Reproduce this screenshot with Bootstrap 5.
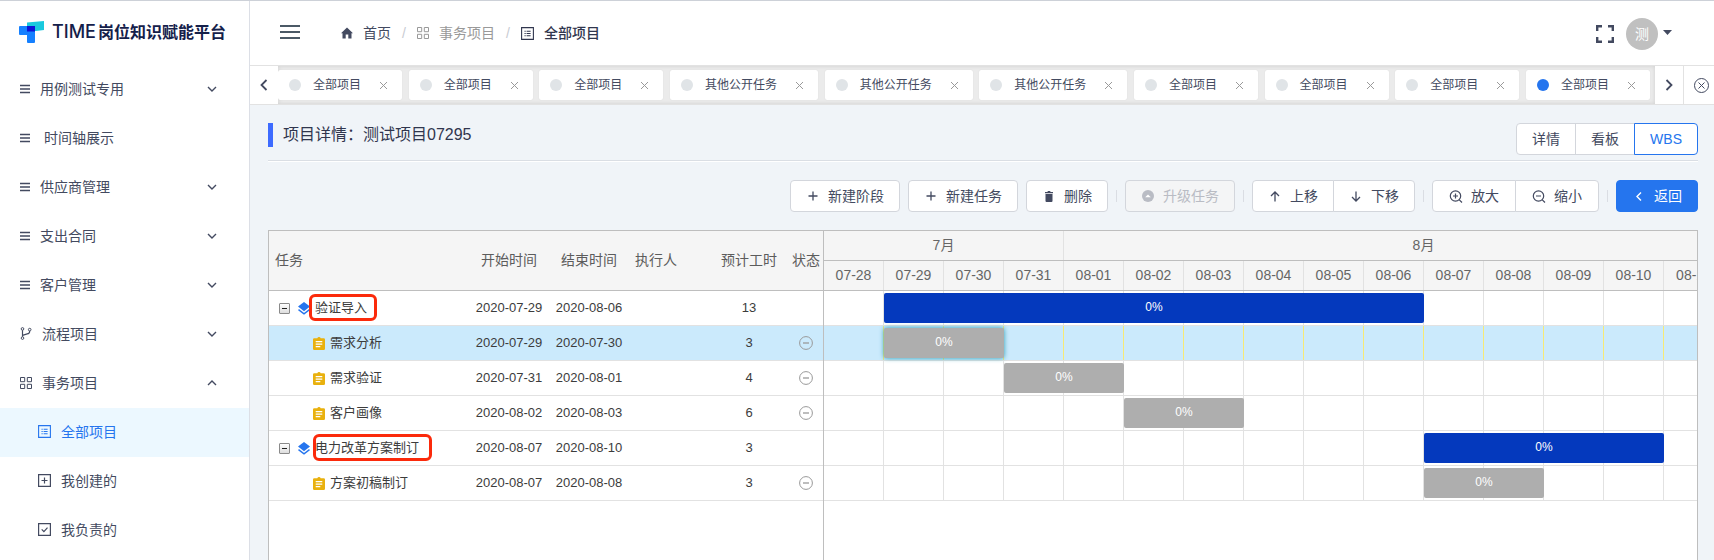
<!DOCTYPE html>
<html lang="zh-CN">
<head>
<meta charset="utf-8">
<meta name="viewport" content="width=device-width, initial-scale=1">
<title>TIME岗位知识赋能平台</title>
<link href="https://cdn.jsdelivr.net/npm/bootstrap@5.3.0/dist/css/bootstrap.min.css" rel="stylesheet">
<style>
  :root { --ink:#434a60; --brand:#2575ee; --rule:#d3d6dc; --gridline:#e2e2e2; --frame:#bebebe; --day:60px; }
  body { font-family:"Liberation Sans","Noto Sans CJK SC",sans-serif; font-size:14px; line-height:20px; color:var(--ink); background:#f0f4f8; border-top:1px solid #cdd1d8; }
  svg { display:block; flex:none; }
  .ic { fill:none; stroke:currentColor; }
  a { color:inherit; text-decoration:none; }

  .side { width:250px; background:#fff; border-right:1px solid #dcdfe6; }
  .logo { height:64px; padding:0 0 2px 19px; gap:8px; color:#14204a; font-size:16px; font-weight:700; white-space:nowrap; }
  .logo b { font-family:Inter,"Liberation Sans",sans-serif; font-size:18px; font-weight:500; margin-right:2px; }
  .menu a { height:49px; padding:0 32px 2px 20px; gap:10px; }
  .menu .sub { padding-left:38px; }
  .menu .current { background:#ecf8ff; color:var(--brand); }

  .topbar { height:64px; padding:0 42px 2px 30px; background:#fff; }
  .plain { border:0; background:none; padding:0; color:inherit; }
  .crumbs { margin-left:41px; padding-top:2px; }
  .crumbs a, .crumbs span { display:flex; align-items:center; gap:10px; }
  .crumbs .sep { color:#c8cbd2; width:26px; justify-content:center; }
  .crumbs .parent { color:#999; }
  .crumbs .here { font-weight:500; color:#30364e; }
  .user { margin-left:12px; gap:5px; }
  .face { width:32px; height:32px; border-radius:50%; background:#c0c0c0; color:#fff; }

  .tabsbar { height:40px; background:#fff; border-top:1px solid #e2e2e2; border-bottom:1px solid #e2e2e2; font-size:12px; }
  .tabsbar .step { width:28px; flex:none; display:flex; align-items:center; justify-content:center; }
  .tabsbar .shut { width:31px; border-left:1px solid #e2e2e2; padding-left:4px; }
  .tabs { background:#ebebeb; box-shadow:inset 0 0 4px rgba(0,0,0,.12); padding:0 5px 0 0; }
  .tab { width:124px; height:30px; padding:0 14px 0 11px; background:#fff; border-radius:2px; box-shadow:0 0 1px rgba(0,0,0,.15); flex:none; color:#434a60; }
  .tab.wide { width:148px; }
  .tab i { width:12px; height:12px; border-radius:50%; background:#e0e4e7; margin-right:12px; }
  .tab.on i { background:var(--brand); }
  .tab .x { margin-left:auto; color:#9a9a9a; }

  .pane { padding:18px 16px 0 18px; }
  .titlebar { padding-bottom:5px; border-bottom:1px solid #dadee4; box-shadow:0 1px #fff; margin-bottom:19px; }
  .titlebar h1 { font-size:16px; line-height:24px; margin:0; border-left:5px solid #3d6bff; padding-left:10px; color:#30364e; font-weight:400; }
  .act { --bs-btn-font-size:14px; --bs-btn-line-height:20px; --bs-btn-padding-y:5px; --bs-btn-padding-x:15px; --bs-btn-border-radius:4px;
    --bs-btn-color:var(--ink); --bs-btn-bg:#fff; --bs-btn-border-color:#d3d6dc; --bs-btn-hover-color:var(--brand); --bs-btn-hover-border-color:var(--brand);
    --bs-btn-disabled-color:#b9bcc4; --bs-btn-disabled-bg:#f4f5f6; --bs-btn-disabled-border-color:#d3d6dc; --bs-btn-disabled-opacity:1;
    display:flex; align-items:center; justify-content:center; gap:8px; white-space:nowrap; flex:none; }
  .act svg { width:14px; }
  .act.picked { --bs-btn-color:var(--brand); --bs-btn-border-color:var(--brand); z-index:1; }
  .act.main { --bs-btn-color:#fff; --bs-btn-bg:var(--brand); --bs-btn-border-color:var(--brand); }
  .w110 { width:110px; } .w82 { width:82px; } .w84 { width:84px; }
  .tools { gap:8px; margin-bottom:18px; }
  .tools hr { width:1px; height:12px; margin:0; border:0; background:#dadde3; opacity:1; }

  .gantt { border:1px solid var(--frame); border-bottom:0; background:#fff; overflow:hidden; }
  .tasks { width:555px; flex:none; border-right:1px solid var(--frame); }
  .tasks table { width:554px; table-layout:fixed; border-collapse:separate; border-spacing:0; font-size:13px; color:#3c3c3c; }
  .tasks th { height:60px; padding:0 0 2px; background:#f5f5f5; border-bottom:1px solid var(--frame); font-size:14px; font-weight:400; color:#5c5c5c; text-align:center; vertical-align:middle; }
  .tasks td { height:35px; padding:0; border-bottom:1px solid var(--gridline); text-align:center; white-space:nowrap; }
  .tasks th.start { text-align:left; padding-left:6px; }
  .tasks .picked td, .line.picked { background-color:#cbeafc; }
  .tasks svg.state { margin:0 auto; color:#999; }
  .node { position:relative; display:flex; align-items:center; padding-left:10px; }
  .node .layer { margin:0 5px 0 8px; color:var(--brand); }
  .node.leaf { padding-left:44px; gap:5px; }
  .node.leaf svg { color:#e9b10e; }
  .note { position:absolute; border:3px solid #fb2a0b; border-radius:6px; height:27px; top:-4px; left:40px; width:68px; }
  .note.long { left:44px; width:119px; }
  .fold { width:11px; height:11px; border:1px solid #8a8a8a; border-radius:1px; background:linear-gradient(#fff,#ddd); display:flex; align-items:center; justify-content:center; }
  .fold::after { content:""; width:5px; height:1px; background:#222; }

  .chart { min-width:0; overflow:hidden; }
  .scale { display:flex; width:calc(16 * var(--day)); height:30px; background:#f5f5f5; color:#666; border-bottom:1px solid var(--frame); }
  .scale span { flex:none; width:var(--day); border-right:1px solid var(--gridline); text-align:center; line-height:29px; }
  .scale .jul { width:calc(4 * var(--day)); } .scale .aug { width:calc(12 * var(--day)); }
  .line { width:calc(16 * var(--day)); height:35px; padding-top:2px; border-bottom:1px solid var(--gridline);
    background-image:repeating-linear-gradient(90deg,transparent 0 59px,var(--tick,#e2e2e2) 59px 60px); }
  .line.picked { --tick:#f7ea76; }
  .span { height:30px; line-height:29px; border-radius:2px; background:#aeaeae; color:#fff; font-size:12px; text-align:center;
    margin-left:calc(var(--from) * var(--day)); width:calc(var(--days) * var(--day)); }
  .span.phase { background:#0439bd; }
  .picked .span { box-shadow:0 0 5px #299cb4; }
</style>
</head>
<body class="vh-100 d-flex overflow-hidden">

<svg class="d-none">
  <symbol id="lines" viewBox="0 0 10 10"><path d="M0 1.5h10M0 5h10M0 8.5h10" stroke-width="1.4"/></symbol>
  <symbol id="down" viewBox="0 0 10 10"><path d="M1 3l4 4 4-4" stroke-width="1.4"/></symbol>
  <symbol id="grid" viewBox="0 0 12 12"><path d="M.5.5h4.2v4.2H.5zM7.3.5h4.2v4.2H7.3zM.5 7.3h4.2v4.2H.5zM7.3 7.3h4.2v4.2H7.3z"/></symbol>
  <symbol id="list" viewBox="0 0 13 13"><path d="M.6.6h11.8v11.8H.6zM3.5 4.2h1.2M3.5 6.5h1.2M3.5 8.8h1.2M5.6 4.2h4M5.6 6.5h4M5.6 8.8h4" stroke-width="1.1"/></symbol>
  <symbol id="x" viewBox="0 0 9 9"><path d="M1 1l7 7M8 1L1 8"/></symbol>
  <symbol id="plus" viewBox="0 0 10 10"><path d="M5 .5v9M.5 5h9" stroke-width="1.3"/></symbol>
  <symbol id="layer" viewBox="0 0 12 13"><path d="M6 0l6 4.6-6 4.6-6-4.6z" fill="currentColor"/><path d="M.5 7.6L6 11.8l5.500-4.200" fill="none" stroke="currentColor" stroke-width="1.400"/></symbol>
  <symbol id="clip" viewBox="0 0 12 13"><path d="M1.300 1.300h3a1.800 1.800 0 013.400 0h3A1.300 1.300 0 0112 2.600v9.100a1.300 1.300 0 01-1.300 1.300H1.300A1.300 1.300 0 010 11.700V2.600a1.300 1.300 0 011.300-1.300z" fill="currentColor"/><path d="M2.700 4.700h6.600M2.700 7.200h6.600M2.700 9.700h4.600" stroke="#fff" stroke-width="1.200"/></symbol>
  <symbol id="minus" viewBox="0 0 14 14"><circle cx="7" cy="7" r="6.400"/><path d="M4 7h6" stroke-width="1.300"/></symbol>
</svg>

<aside class="side flex-shrink-0 overflow-hidden">
  <div class="logo d-flex align-items-center">
    <svg width="25" height="22" viewBox="0 0 25 22"><path d="M8 1.500L25 0v9l-8 1H8z" fill="#19c9de"/><path d="M1 5h15v16q0 1-1 1H9q-1 0-1-1v-7H1q-1 0-1-1V6q0-1 1-1z" fill="#1580ff"/><path d="M8 5h8v5.500H8z" fill="#0c12d6"/></svg>
    <span><b>TIME</b>岗位知识赋能平台</span>
  </div>
  <nav class="menu">
    <a href="#" class="d-flex align-items-center"><svg class="ic" width="10" height="10"><use href="#lines"/></svg><span class="flex-fill">用例测试专用</span><svg class="ic" width="10" height="10"><use href="#down"/></svg></a>
    <a href="#" class="d-flex align-items-center"><svg class="ic" width="10" height="10"><use href="#lines"/></svg><span class="flex-fill">&nbsp;时间轴展示</span></a>
    <a href="#" class="d-flex align-items-center"><svg class="ic" width="10" height="10"><use href="#lines"/></svg><span class="flex-fill">供应商管理</span><svg class="ic" width="10" height="10"><use href="#down"/></svg></a>
    <a href="#" class="d-flex align-items-center"><svg class="ic" width="10" height="10"><use href="#lines"/></svg><span class="flex-fill">支出合同</span><svg class="ic" width="10" height="10"><use href="#down"/></svg></a>
    <a href="#" class="d-flex align-items-center"><svg class="ic" width="10" height="10"><use href="#lines"/></svg><span class="flex-fill">客户管理</span><svg class="ic" width="10" height="10"><use href="#down"/></svg></a>
    <a href="#" class="d-flex align-items-center"><svg class="ic" width="12" height="13" viewBox="0 0 12 13"><circle cx="2.500" cy="1.900" r="1.300"/><circle cx="2.500" cy="11.100" r="1.300"/><circle cx="9.700" cy="2.600" r="1.300"/><path d="M2.500 3.200v6.600M9.700 3.900q0 2.600-2.500 3L2.500 8.300" stroke-width="1.200"/></svg><span class="flex-fill">流程项目</span><svg class="ic" width="10" height="10"><use href="#down"/></svg></a>
    <a href="#" class="d-flex align-items-center"><svg class="ic" width="12" height="12"><use href="#grid"/></svg><span class="flex-fill">事务项目</span><svg class="ic" width="10" height="10" viewBox="0 0 10 10"><path d="M1 7l4-4 4 4" stroke-width="1.400"/></svg></a>
    <a href="#" class="sub current d-flex align-items-center" aria-current="page"><svg class="ic" width="13" height="13"><use href="#list"/></svg><span>全部项目</span></a>
    <a href="#" class="sub d-flex align-items-center"><svg class="ic" width="13" height="13" viewBox="0 0 13 13"><path d="M.6.6h11.800v11.800H.6zM6.500 3.500v6M3.500 6.500h6" stroke-width="1.200"/></svg><span>我创建的</span></a>
    <a href="#" class="sub d-flex align-items-center"><svg class="ic" width="13" height="13" viewBox="0 0 13 13"><path d="M.6.6h11.800v11.800H.6zM3.700 6.400l2.200 2.200 3.600-4" stroke-width="1.200"/></svg><span>我负责的</span></a>
  </nav>
</aside>

<main class="flex-fill d-flex flex-column" style="min-width:0">
  <header class="topbar d-flex align-items-center">
    <button class="plain" aria-label="收起菜单"><svg class="ic" width="20" height="14" viewBox="0 0 20 14" stroke-width="2" style="color:#4b5966"><path d="M0 1h20M0 7h20M0 13h20"/></svg></button>
    <nav class="crumbs d-flex align-items-center" aria-label="breadcrumb">
      <a href="#"><svg width="12" height="12" viewBox="0 0 12 12"><path d="M6 .5L0 6.200h1.500V11.500h3.200V7.600h2.600v3.900h3.200V6.200H12z" fill="currentColor"/></svg>首页</a>
      <span class="sep">/</span>
      <a href="#" class="parent"><svg class="ic" width="12" height="12"><use href="#grid"/></svg>事务项目</a>
      <span class="sep">/</span>
      <span class="here"><svg class="ic" width="13" height="13"><use href="#list"/></svg>全部项目</span>
    </nav>
    <button class="plain ms-auto pt-1" aria-label="全屏"><svg class="ic" width="18" height="18" viewBox="0 0 18 18" stroke-width="2.400"><path d="M1.200 6V1.200H6M12 1.200h4.800V6M16.800 12v4.800H12M6 16.800H1.200V12"/></svg></button>
    <button class="plain user d-flex align-items-center"><span class="face d-flex align-items-center justify-content-center mt-1">测</span><svg width="9" height="5" viewBox="0 0 9 5"><path d="M0 0h9L4.500 5z" fill="currentColor"/></svg></button>
  </header>

  <div class="tabsbar d-flex flex-shrink-0">
    <button class="plain step" aria-label="向左"><svg class="ic" width="8" height="12" viewBox="0 0 8 12"><path d="M6.500 1l-5 5 5 5" stroke-width="1.800"/></svg></button>
    <div class="tabs flex-fill d-flex align-items-center justify-content-between overflow-hidden">
      <div class="tab d-flex align-items-center"><i></i>全部项目<button class="plain x" aria-label="关闭"><svg class="ic" width="9" height="9"><use href="#x"/></svg></button></div>
      <div class="tab d-flex align-items-center"><i></i>全部项目<button class="plain x" aria-label="关闭"><svg class="ic" width="9" height="9"><use href="#x"/></svg></button></div>
      <div class="tab d-flex align-items-center"><i></i>全部项目<button class="plain x" aria-label="关闭"><svg class="ic" width="9" height="9"><use href="#x"/></svg></button></div>
      <div class="tab wide d-flex align-items-center"><i></i>其他公开任务<button class="plain x" aria-label="关闭"><svg class="ic" width="9" height="9"><use href="#x"/></svg></button></div>
      <div class="tab wide d-flex align-items-center"><i></i>其他公开任务<button class="plain x" aria-label="关闭"><svg class="ic" width="9" height="9"><use href="#x"/></svg></button></div>
      <div class="tab wide d-flex align-items-center"><i></i>其他公开任务<button class="plain x" aria-label="关闭"><svg class="ic" width="9" height="9"><use href="#x"/></svg></button></div>
      <div class="tab d-flex align-items-center"><i></i>全部项目<button class="plain x" aria-label="关闭"><svg class="ic" width="9" height="9"><use href="#x"/></svg></button></div>
      <div class="tab d-flex align-items-center"><i></i>全部项目<button class="plain x" aria-label="关闭"><svg class="ic" width="9" height="9"><use href="#x"/></svg></button></div>
      <div class="tab d-flex align-items-center"><i></i>全部项目<button class="plain x" aria-label="关闭"><svg class="ic" width="9" height="9"><use href="#x"/></svg></button></div>
      <div class="tab on d-flex align-items-center"><i></i>全部项目<button class="plain x" aria-label="关闭"><svg class="ic" width="9" height="9"><use href="#x"/></svg></button></div>
    </div>
    <button class="plain step" aria-label="向右"><svg class="ic" width="8" height="12" viewBox="0 0 8 12"><path d="M1.500 1l5 5-5 5" stroke-width="1.800"/></svg></button>
    <button class="plain step shut" aria-label="全部关闭"><svg class="ic" width="15" height="15" viewBox="0 0 15 15"><circle cx="7.500" cy="7.500" r="7"/><path d="M4.500 4.500l6 6M10.500 4.500l-6 6"/></svg></button>
  </div>

  <section class="pane flex-fill d-flex flex-column" style="min-height:0">
    <div class="titlebar d-flex justify-content-between align-items-start">
      <h1>项目详情：测试项目07295</h1>
      <div class="btn-group">
        <button class="btn act">详情</button><button class="btn act">看板</button><button class="btn act picked">WBS</button>
      </div>
    </div>

    <div class="tools d-flex align-items-center justify-content-end">
      <button class="btn act w110"><svg class="ic" width="10" height="10"><use href="#plus"/></svg>新建阶段</button>
      <button class="btn act w110"><svg class="ic" width="10" height="10"><use href="#plus"/></svg>新建任务</button>
      <button class="btn act w82"><svg width="8" height="11" viewBox="0 0 8 11"><path d="M0 1h2.300L3 0h2l.7 1H8v1.200H0zM.5 3h7v7q0 1-1 1h-5q-1 0-1-1z" fill="currentColor"/></svg>删除</button>
      <hr>
      <button class="btn act w110" disabled><svg width="12" height="12" viewBox="0 0 12 12"><circle cx="6" cy="6" r="6" fill="currentColor"/><path d="M3.200 7.200L6 4.600l2.800 2.600z" fill="#fff"/></svg>升级任务</button>
      <hr>
      <div class="btn-group">
        <button class="btn act w82"><svg class="ic" width="10" height="11" viewBox="0 0 10 11"><path d="M5 10.500V1M1 5l4-4 4 4" stroke-width="1.300"/></svg>上移</button>
        <button class="btn act w82"><svg class="ic" width="10" height="11" viewBox="0 0 10 11"><path d="M5 .5V10M1 6l4 4 4-4" stroke-width="1.300"/></svg>下移</button>
      </div>
      <hr>
      <div class="btn-group">
        <button class="btn act w84"><svg class="ic" width="13" height="13" viewBox="0 0 13 13" stroke-width="1.200"><circle cx="6" cy="6" r="5.200"/><path d="M9.800 9.800l2.700 2.700M6 3.500v5M3.500 6h5"/></svg>放大</button>
        <button class="btn act w84"><svg class="ic" width="13" height="13" viewBox="0 0 13 13" stroke-width="1.200"><circle cx="6" cy="6" r="5.200"/><path d="M9.800 9.800l2.700 2.700M3.500 6h5"/></svg>缩小</button>
      </div>
      <hr>
      <button class="btn act main w82"><svg class="ic" width="6" height="9" viewBox="0 0 6 9"><path d="M5 .5l-4 4 4 4" stroke-width="1.400"/></svg>返回</button>
    </div>

    <div class="gantt flex-fill d-flex">
      <div class="tasks">
        <table>
          <colgroup><col style="width:200px"><col style="width:80px"><col style="width:80px"><col style="width:80px"><col style="width:80px"><col style="width:34px"></colgroup>
          <thead><tr><th class="start">任务</th><th>开始时间</th><th>结束时间</th><th class="start">执行人</th><th>预计工时</th><th>状态</th></tr></thead>
          <tbody>
            <tr><td><div class="node"><button class="plain fold" aria-label="折叠"></button><svg class="layer" width="12" height="13"><use href="#layer"/></svg>验证导入<span class="note"></span></div></td><td>2020-07-29</td><td>2020-08-06</td><td></td><td>13</td><td></td></tr>
            <tr class="picked"><td><div class="node leaf"><svg width="12" height="13"><use href="#clip"/></svg>需求分析</div></td><td>2020-07-29</td><td>2020-07-30</td><td></td><td>3</td><td><svg class="ic state" width="14" height="14"><use href="#minus"/></svg></td></tr>
            <tr><td><div class="node leaf"><svg width="12" height="13"><use href="#clip"/></svg>需求验证</div></td><td>2020-07-31</td><td>2020-08-01</td><td></td><td>4</td><td><svg class="ic state" width="14" height="14"><use href="#minus"/></svg></td></tr>
            <tr><td><div class="node leaf"><svg width="12" height="13"><use href="#clip"/></svg>客户画像</div></td><td>2020-08-02</td><td>2020-08-03</td><td></td><td>6</td><td><svg class="ic state" width="14" height="14"><use href="#minus"/></svg></td></tr>
            <tr><td><div class="node"><button class="plain fold" aria-label="折叠"></button><svg class="layer" width="12" height="13"><use href="#layer"/></svg>电力改革方案制订<span class="note long"></span></div></td><td>2020-08-07</td><td>2020-08-10</td><td></td><td>3</td><td></td></tr>
            <tr><td><div class="node leaf"><svg width="12" height="13"><use href="#clip"/></svg>方案初稿制订</div></td><td>2020-08-07</td><td>2020-08-08</td><td></td><td>3</td><td><svg class="ic state" width="14" height="14"><use href="#minus"/></svg></td></tr>
          </tbody>
        </table>
      </div>
      <div class="chart flex-fill">
        <div class="scale"><span class="jul">7月</span><span class="aug">8月</span></div>
        <div class="scale"><span>07-28</span><span>07-29</span><span>07-30</span><span>07-31</span><span>08-01</span><span>08-02</span><span>08-03</span><span>08-04</span><span>08-05</span><span>08-06</span><span>08-07</span><span>08-08</span><span>08-09</span><span>08-10</span><span>08-11</span></div>
        <div class="line"><div class="span phase" style="--from:1;--days:9">0%</div></div>
        <div class="line picked"><div class="span" style="--from:1;--days:2">0%</div></div>
        <div class="line"><div class="span" style="--from:3;--days:2">0%</div></div>
        <div class="line"><div class="span" style="--from:5;--days:2">0%</div></div>
        <div class="line"><div class="span phase" style="--from:10;--days:4">0%</div></div>
        <div class="line"><div class="span" style="--from:10;--days:2">0%</div></div>
      </div>
    </div>
  </section>
</main>
<script src="https://cdn.jsdelivr.net/npm/bootstrap@5.3.0/dist/js/bootstrap.bundle.min.js"></script>
</body>
</html>
